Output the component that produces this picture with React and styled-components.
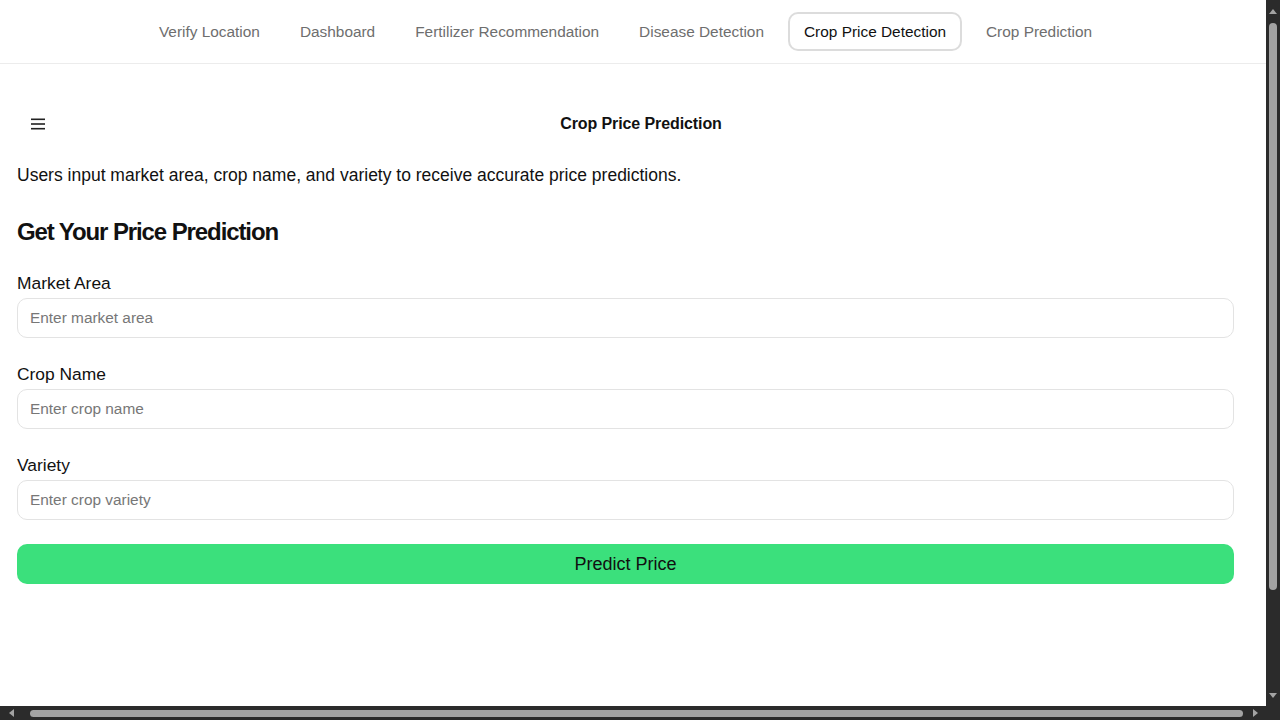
import React from 'react';
import styled, { createGlobalStyle } from 'styled-components';

const GlobalStyle = createGlobalStyle`
  html, body {
    margin: 0;
    background: #ffffff;
    overflow: hidden;
  }
  body {
    color: #111111;
    font-family: 'Liberation Sans', Arial, sans-serif;
  }
`;

/* window frame: page area plus the dark scrollbars of the browser */
const Frame = styled.div`
  width: 100vw;
  height: 100vh;
  display: grid;
  grid-template-columns: 1fr 14px;
  grid-template-rows: 1fr 14px;
  background: #ffffff;
`;

const Content = styled.div`
  overflow: hidden;
  background: #ffffff;
`;

const ScrollBar = styled.div`
  background: #2b2b2b;
  display: flex;
  flex-direction: ${(p) => (p.$vertical ? 'column' : 'row')};
  align-items: center;
`;

const Corner = styled.div`
  background: #2b2b2b;
`;

const ArrowButton = styled.div`
  flex: none;
  width: ${(p) => (p.$vertical ? '14px' : '22px')};
  height: ${(p) => (p.$vertical ? '22px' : '14px')};
  display: flex;
  align-items: center;
  justify-content: center;

  &::after {
    content: '';
    width: 0;
    height: 0;
    ${(p) => {
      const c = '#a3a3a3';
      if (p.$dir === 'up')
        return `border-left: 4px solid transparent; border-right: 4px solid transparent; border-bottom: 5px solid ${c};`;
      if (p.$dir === 'down')
        return `border-left: 4px solid transparent; border-right: 4px solid transparent; border-top: 5px solid ${c};`;
      if (p.$dir === 'left')
        return `border-top: 4px solid transparent; border-bottom: 4px solid transparent; border-right: 5px solid ${c};`;
      return `border-top: 4px solid transparent; border-bottom: 4px solid transparent; border-left: 5px solid ${c};`;
    }}
  }
`;

const Track = styled.div`
  flex: 1;
  align-self: stretch;
  display: flex;
  flex-direction: ${(p) => (p.$vertical ? 'column' : 'row')};
  align-items: center;
  padding: ${(p) => (p.$vertical ? '1px 0 0' : '0 0 0 8px')};
`;

const Thumb = styled.div`
  background: #a3a3a3;
  border-radius: 4px;
  width: ${(p) => (p.$vertical ? '8px' : `${p.$length}px`)};
  height: ${(p) => (p.$vertical ? `${p.$length}px` : '7px')};
`;

const Page = styled.div`
  width: 1282px;
  min-height: 835px;
  background: #ffffff;
`;

const Nav = styled.nav`
  display: flex;
  justify-content: center;
  gap: 8px;
  padding: 12px 31px 12px 0;
  border-bottom: 1px solid #ececec;
`;

const NavItem = styled.a`
  padding: 8px 14px;
  border: 2px solid ${(p) => (p.$active ? '#dcdcdc' : 'transparent')};
  border-radius: 10px;
  font-size: 15.4px;
  line-height: 19px;
  color: ${(p) => (p.$active ? '#111111' : '#6e6e6e')};
  text-decoration: none;
  cursor: pointer;
`;

const Main = styled.main`
  padding: 40px 0 0 17px;
`;

const Header = styled.div`
  width: 1248px;
  height: 40px;
  display: grid;
  grid-template-columns: 1fr auto 1fr;
  align-items: center;
`;

const MenuButton = styled.button`
  justify-self: start;
  margin-left: 12px;
  padding: 0;
  width: 18px;
  height: 18px;
  border: none;
  background: transparent;
  display: flex;
  align-items: center;
  justify-content: center;
  cursor: pointer;
`;

const Title = styled.h1`
  margin: 0;
  font-size: 16px;
  font-weight: 700;
  letter-spacing: -0.1px;
  color: #111111;
`;

const Description = styled.p`
  margin: 20px 0 0;
  font-size: 17.5px;
  line-height: 22px;
  color: #111111;
`;

const Heading = styled.h2`
  margin: 31px 0 0;
  font-size: 24px;
  line-height: 30px;
  font-weight: 700;
  letter-spacing: -1.1px;
  color: #111111;
`;

const Form = styled.form`
  width: 1217px;
  margin-top: 26px;
  display: flex;
  flex-direction: column;
  gap: 26px;
`;

const Field = styled.div`
  display: flex;
  flex-direction: column;
  gap: 5px;
`;

const Label = styled.label`
  font-size: 17.4px;
  line-height: 20px;
  color: #111111;
`;

const Input = styled.input`
  box-sizing: border-box;
  height: 40px;
  padding: 0 12px;
  border: 1px solid #e3e3e3;
  border-radius: 10px;
  background: #ffffff;
  font-family: 'Liberation Sans', Arial, sans-serif;
  font-size: 15.4px;
  color: #111111;
  outline: none;
  &::placeholder {
    color: #777777;
  }
`;

const SubmitButton = styled.button`
  margin-top: -2px;
  height: 40px;
  border: none;
  border-radius: 10px;
  background: #3be07c;
  font-family: 'Liberation Sans', Arial, sans-serif;
  font-size: 18px;
  color: #111111;
  cursor: pointer;
`;

const navLinks = [
  'Verify Location',
  'Dashboard',
  'Fertilizer Recommendation',
  'Disease Detection',
  'Crop Price Detection',
  'Crop Prediction',
];

const fields = [
  { label: 'Market Area', placeholder: 'Enter market area' },
  { label: 'Crop Name', placeholder: 'Enter crop name' },
  { label: 'Variety', placeholder: 'Enter crop variety' },
];

const App = () => (
  <Frame>
    <GlobalStyle />
    <Content>
      <Page>
        <Nav>
          {navLinks.map((link) => (
            <NavItem key={link} $active={link === 'Crop Price Detection'}>
              {link}
            </NavItem>
          ))}
        </Nav>
        <Main>
          <Header>
            <MenuButton type="button" aria-label="menu">
              <svg width="16" height="14" viewBox="0 0 16 14">
                <rect x="1" y="1.5" width="14" height="1.6" fill="#222" />
                <rect x="1" y="6.2" width="14" height="1.6" fill="#222" />
                <rect x="1" y="10.9" width="14" height="1.6" fill="#222" />
              </svg>
            </MenuButton>
            <Title>Crop Price Prediction</Title>
            <span />
          </Header>
          <Description>
            Users input market area, crop name, and variety to receive accurate price predictions.
          </Description>
          <Heading>Get Your Price Prediction</Heading>
          <Form onSubmit={(e) => e.preventDefault()}>
            {fields.map((f) => (
              <Field key={f.label}>
                <Label>{f.label}</Label>
                <Input placeholder={f.placeholder} />
              </Field>
            ))}
            <SubmitButton type="submit">Predict Price</SubmitButton>
          </Form>
        </Main>
      </Page>
    </Content>
    <ScrollBar $vertical>
      <ArrowButton $vertical $dir="up" />
      <Track $vertical>
        <Thumb $vertical $length={567} />
      </Track>
      <ArrowButton $vertical $dir="down" />
    </ScrollBar>
    <ScrollBar>
      <ArrowButton $dir="left" />
      <Track>
        <Thumb $length={1213} />
      </Track>
      <ArrowButton $dir="right" />
    </ScrollBar>
    <Corner />
  </Frame>
);

export default App;
